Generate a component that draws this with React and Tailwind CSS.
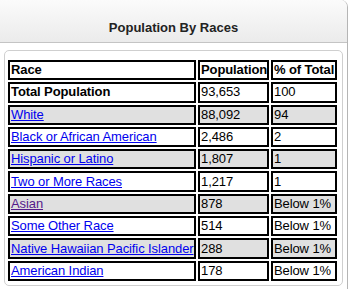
const rows = [
  { race: 'White', pop: '88,092', pct: '94' },
  { race: 'Black or African American', pop: '2,486', pct: '2' },
  { race: 'Hispanic or Latino', pop: '1,807', pct: '1' },
  { race: 'Two or More Races', pop: '1,217', pct: '1' },
  { race: 'Asian', pop: '878', pct: 'Below 1%', visited: true },
  { race: 'Some Other Race', pop: '514', pct: 'Below 1%' },
  { race: 'Native Hawaiian Pacific Islander', pop: '288', pct: 'Below 1%' },
  { race: 'American Indian', pop: '178', pct: 'Below 1%' },
];

const cell = 'border-2 border-black pl-[1px] pr-0 py-0 h-[20.3px] leading-[16px] text-left align-middle whitespace-nowrap overflow-hidden';

export default function App() {
  return (
    <div className="w-[349px] h-[289px] bg-white font-['Liberation_Sans',Arial,sans-serif] text-[13px] text-black overflow-hidden">
      <div className="w-[348px] h-[289px] border-r border-[#b5b5b5] rounded-tr-[7px] flex flex-col">
        <div className="h-[43px] shrink-0 bg-gradient-to-b from-[#fbfbfb] to-[#ebebeb] border-b border-[#c4c4c4] rounded-tr-[7px] flex items-end justify-center pb-[5px]">
          <span className="font-bold text-[13px] text-[#222]">Population By Races</span>
        </div>
        <div className="flex-1 px-[4px] pt-[7px] pb-[2px]">
          <div className="h-[236px] border border-[#cfcfcf] rounded-[5px] pl-[1px] pt-[7px]">
            <table className="border-separate border-spacing-[2px] table-fixed w-[333px] tracking-[-0.1px]">
              <colgroup>
                <col className="w-[188px]" />
                <col className="w-[71px]" />
                <col className="w-[66px]" />
              </colgroup>
              <tbody>
                <tr>
                  <th className={`${cell} font-bold`}>Race</th>
                  <th className={`${cell} font-bold`}>Population</th>
                  <th className={`${cell} font-bold`}>% of Total</th>
                </tr>
                <tr>
                  <td className={`${cell} font-bold`}>Total Population</td>
                  <td className={cell}>93,653</td>
                  <td className={cell}>100</td>
                </tr>
                {rows.map((r, i) => (
                  <tr key={r.race} className={i % 2 === 0 ? 'bg-[#e0e0e0]' : 'bg-white'}>
                    <td className={cell}>
                      <a href="#" className={`underline ${r.visited ? 'text-[#551a8b]' : 'text-[#0000ee]'}`}>
                        {r.race}
                      </a>
                    </td>
                    <td className={cell}>{r.pop}</td>
                    <td className={cell}>{r.pct}</td>
                  </tr>
                ))}
              </tbody>
            </table>
          </div>
        </div>
      </div>
    </div>
  );
}
